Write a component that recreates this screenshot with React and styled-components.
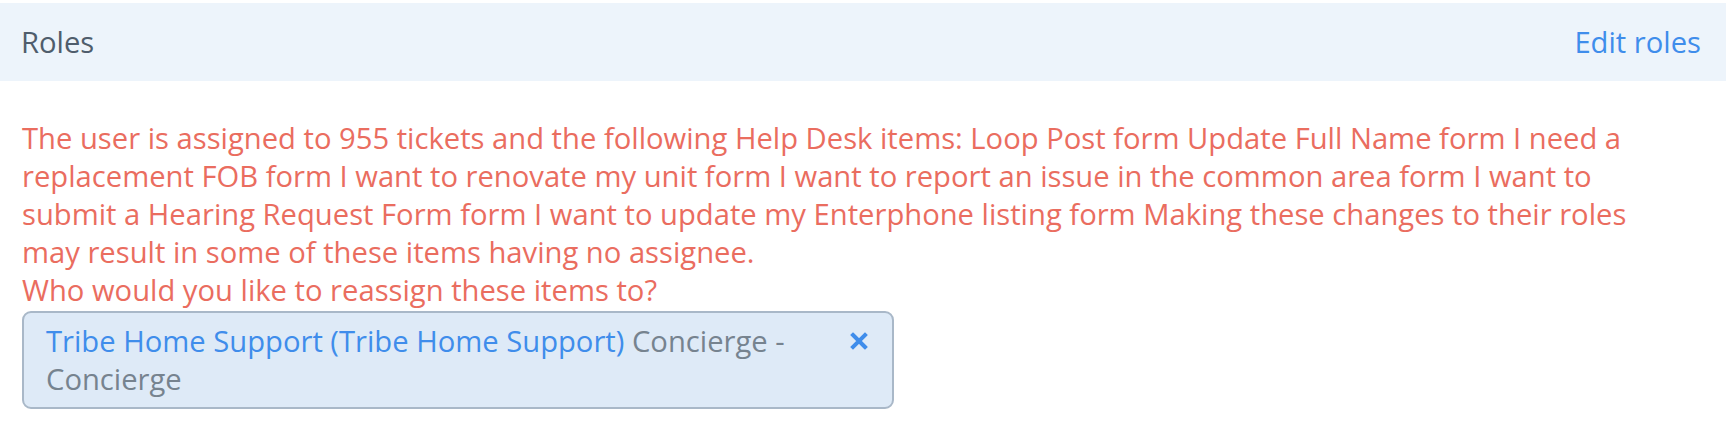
import styled, { createGlobalStyle } from 'styled-components';

const GlobalStyle = createGlobalStyle`
  body {
    margin: 0;
    background: #ffffff;
    font-family: "Open Sans", Lato, sans-serif;
  }
`;

const Page = styled.div`
  padding-top: 3px;
`;

const Header = styled.div`
  display: flex;
  align-items: center;
  justify-content: space-between;
  height: 78px;
  padding: 0 25px 0 21px;
  background: #edf4fb;
  font-size: 29.2px;
`;

const Title = styled.span`
  color: #4f5d6c;
`;

const EditLink = styled.a`
  color: #3f8deb;
  text-decoration: none;
  cursor: pointer;
`;

const Body = styled.div`
  padding: 38px 36px 0 22px;
`;

const Warning = styled.p`
  margin: 0;
  color: #ea6d5f;
  font-size: 29.2px;
  line-height: 38px;
`;

const Chip = styled.div`
  display: flex;
  align-items: flex-start;
  width: 872px;
  box-sizing: border-box;
  margin-top: 2px;
  padding: 9px 23px 9px 22px;
  background: #deeaf7;
  border: 2px solid #a9b8c8;
  border-radius: 9px;
  font-size: 29.2px;
  line-height: 38px;
`;

const ChipText = styled.div`
  flex: 1;
  padding-right: 40px;
`;

const Name = styled.span`
  color: #3f8deb;
`;

const Role = styled.span`
  color: #76838f;
`;

const Remove = styled.button`
  display: flex;
  align-items: center;
  justify-content: center;
  width: 20px;
  height: 38px;
  padding: 0;
  border: none;
  background: none;
  cursor: pointer;
`;

const App = () => {
  return (
    <Page>
      <GlobalStyle />
      <Header>
        <Title>Roles</Title>
        <EditLink>Edit roles</EditLink>
      </Header>
      <Body>
        <Warning>
          The user is assigned to 955 tickets and the following Help Desk items: Loop Post form Update Full Name form I need a replacement FOB form I want to renovate my unit form I want to report an issue in the common area form I want to submit a Hearing Request Form form I want to update my Enterphone listing form Making these changes to their roles may result in some of these items having no assignee.
          <br />
          Who would you like to reassign these items to?
        </Warning>
        <Chip>
          <ChipText>
            <Name>Tribe Home Support (Tribe Home Support)</Name>{' '}
            <Role>Concierge - Concierge</Role>
          </ChipText>
          <Remove aria-label="Remove">
            <svg width="18" height="18" viewBox="0 0 18 18">
              <path d="M3 3 L15 15 M15 3 L3 15" stroke="#3f8deb" strokeWidth="4" strokeLinecap="square" />
            </svg>
          </Remove>
        </Chip>
      </Body>
    </Page>
  );
};

export default App;
